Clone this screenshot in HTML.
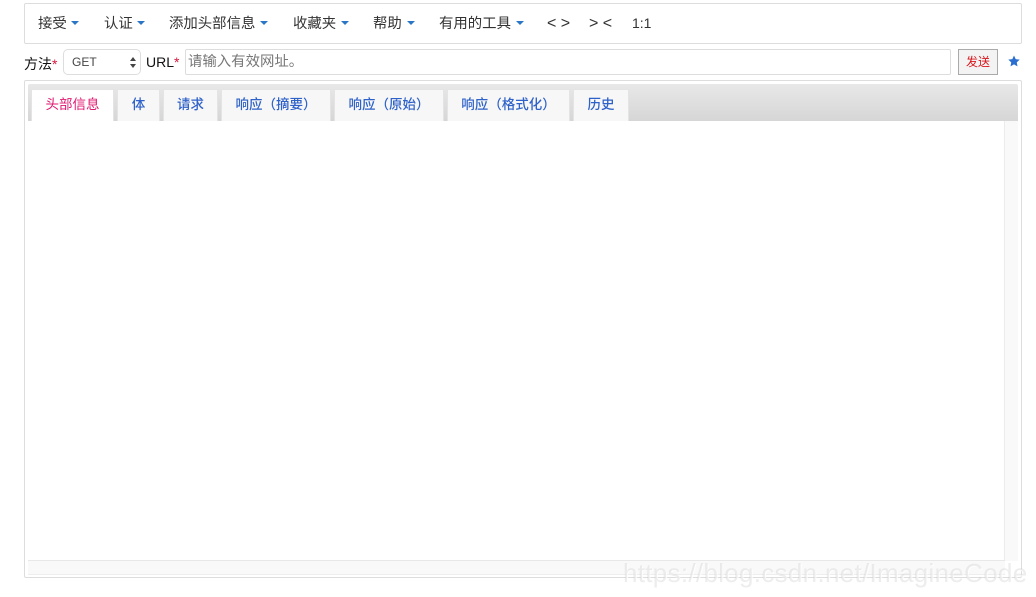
<!DOCTYPE html>
<html><head><meta charset="utf-8"><style>
html,body{margin:0;padding:0;background:#fff;width:1036px;height:597px;overflow:hidden}
body{position:relative;font-family:"Liberation Sans","Noto Sans CJK SC",sans-serif;color:#333}
.a{position:absolute;box-sizing:border-box;white-space:nowrap}
.m{font-size:14.4px;line-height:20px;top:13.5px;color:#333}
.c{position:absolute;width:0;height:0;border-left:4px solid transparent;border-right:4px solid transparent;border-top:4px solid #2a76c6;top:21px}
.t{top:89px;height:32px;background:#f7f7f7;border:1px solid #e4e4e4;border-bottom:0;font-size:13.5px;line-height:29px;text-align:center;color:#2f62c9;font-weight:500}
</style></head><body>
<div class="a" style="left:24px;top:3px;width:998px;height:41px;border:1px solid #ddd;border-radius:2px"></div>
<div class="a m" style="left:38px;top:14px">接受</div><div class="c" style="left:71px"></div>
<div class="a m" style="left:104px;top:14px">认证</div><div class="c" style="left:137px"></div>
<div class="a m" style="left:169px;top:14px">添加头部信息</div><div class="c" style="left:260px"></div>
<div class="a m" style="left:293px;top:14px">收藏夹</div><div class="c" style="left:341px"></div>
<div class="a m" style="left:373px;top:14px">帮助</div><div class="c" style="left:407px"></div>
<div class="a m" style="left:439px;top:14px">有用的工具</div><div class="c" style="left:516px"></div>
<div class="a m" style="left:547px;top:14px;font-size:16px">&lt; &gt;</div>
<div class="a m" style="left:589px;top:14px;font-size:16px">&gt; &lt;</div>
<div class="a m" style="left:632px;top:13px;font-size:14px">1:1</div>

<div class="a" style="left:24px;top:54px;font-size:14px;line-height:20px;color:#111">方法<span style="color:#d9163c">*</span></div>
<div class="a" style="left:63px;top:49px;width:78px;height:26px;border:1px solid #ddd;border-radius:5px;background:#fff;font-size:12px;line-height:24px;padding-left:8px;color:#444">GET</div>
<svg class="a" style="left:129px;top:56px" width="8" height="13" viewBox="0 0 8 13"><path d="M4 1 L7 5 H1 Z M4 12 L7 8 H1 Z" fill="#444"/></svg>
<div class="a" style="left:146px;top:52px;font-size:14px;line-height:20px;color:#111">URL<span style="color:#d9163c">*</span></div>
<div class="a" style="left:185px;top:49px;width:766px;height:26px;border:1px solid #ddd;border-radius:2px;font-size:14.4px;line-height:24px;padding-left:2px;color:#777">请输入有效网址。</div>
<div class="a" style="left:958px;top:49px;width:40px;height:26px;border:1px solid #aaa;background:#f3f3f3;font-size:12px;line-height:24px;text-align:center;color:#d9161c">发送</div>
<svg class="a" style="left:1008px;top:55px" width="12" height="12" viewBox="0 0 24 24"><path d="M12 1 L15.4 8.3 L23.4 9.3 L17.5 14.8 L19 22.8 L12 18.8 L5 22.8 L6.5 14.8 L.6 9.3 L8.6 8.3 Z" fill="#2a6fd0"/></svg>

<div class="a" style="left:24px;top:80px;width:998px;height:498px;border:1px solid #ddd;border-radius:2px"></div>
<div class="a" style="left:28px;top:84px;width:990px;height:37px;background:linear-gradient(#e8e8e8,#d6d6d6);border-radius:2px 2px 0 0"></div>
<div class="a t" style="left:31px;width:83px;background:#fff;color:#e0146e;font-weight:400">头部信息</div>
<div class="a t" style="left:117px;width:43px">体</div>
<div class="a t" style="left:163px;width:55px">请求</div>
<div class="a t" style="left:221px;width:110px">响应（摘要）</div>
<div class="a t" style="left:334px;width:110px">响应（原始）</div>
<div class="a t" style="left:447px;width:123px">响应（格式化）</div>
<div class="a t" style="left:573px;width:56px">历史</div>

<div class="a" style="left:1004px;top:121px;width:14px;height:440px;background:#f9f9f9;border-left:1px solid #ececec"></div>
<div class="a" style="left:28px;top:560px;width:977px;height:15px;background:#f9f9f9;border-top:1px solid #e8e8e8;border-bottom:1px solid #eee"></div>

<div class="a" style="left:623px;top:556px;font-size:26px;line-height:34px;letter-spacing:.3px;color:rgba(195,195,195,.3);text-shadow:1px 1px 0 rgba(255,255,255,.8)">https://blog.csdn.net/ImagineCode</div>
</body></html>
